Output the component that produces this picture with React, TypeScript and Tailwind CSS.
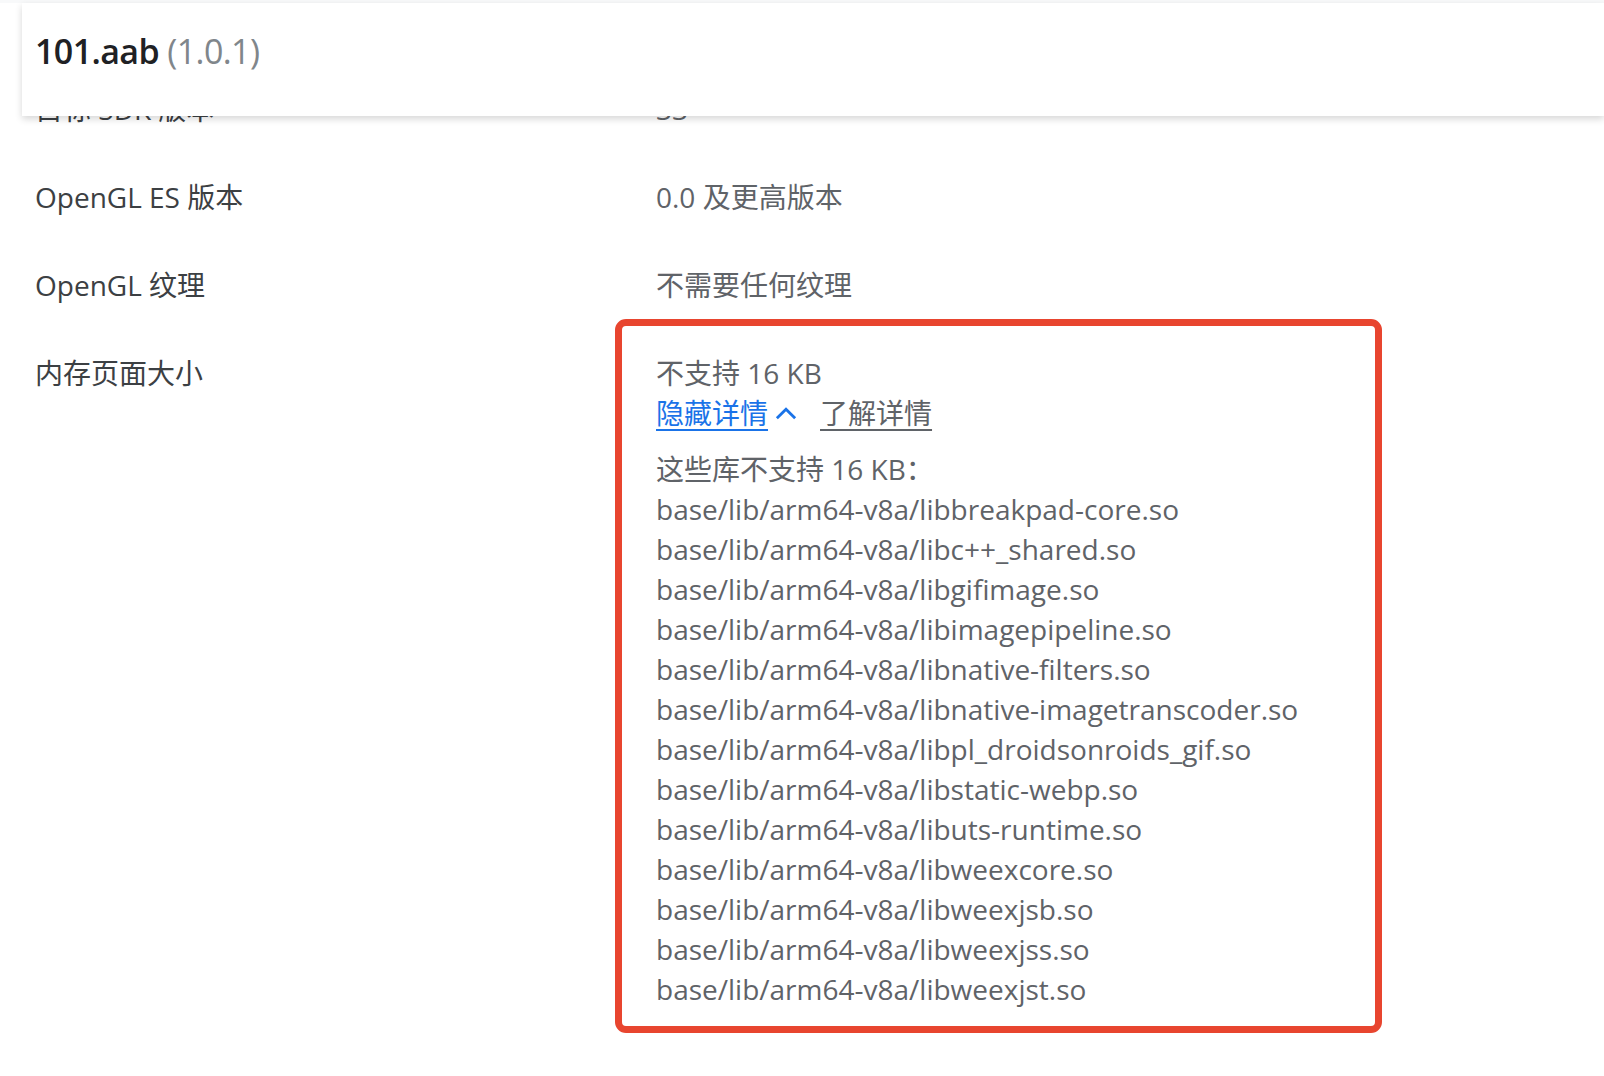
import React from "react";

const FONT = "font-['Open_Sans','Noto_Sans_CJK_SC',sans-serif]";

interface Row {
  label: string;
  value: string;
}

const rows: Row[] = [
  { label: "目标 SDK 版本", value: "33" },
  { label: "OpenGL ES 版本", value: "0.0 及更高版本" },
  { label: "OpenGL 纹理", value: "不需要任何纹理" },
];

const libs = [
  "libbreakpad-core.so",
  "libc++_shared.so",
  "libgifimage.so",
  "libimagepipeline.so",
  "libnative-filters.so",
  "libnative-imagetranscoder.so",
  "libpl_droidsonroids_gif.so",
  "libstatic-webp.so",
  "libuts-runtime.so",
  "libweexcore.so",
  "libweexjsb.so",
  "libweexjss.so",
  "libweexjst.so",
];

const ChevronUp = () => (
  <svg width="26" height="26" viewBox="0 0 24 24" className="ml-[5px]" fill="none">
    <path d="M4.5 16l7.5-7.5 7.5 7.5" stroke="#1a73e8" strokeWidth="2.6" strokeLinecap="square" />
  </svg>
);

const App: React.FC = () => {
  return (
    <div className={`relative h-[1076px] overflow-hidden bg-white ${FONT}`}>
      <div className="h-[3px] bg-[#f8f9fa]" />

      {/* sticky title bar over the scrolled content */}
      <div className="absolute top-[3px] left-[22px] right-0 z-10 h-[113px] bg-white shadow-[0_3px_7px_rgba(0,0,0,0.16)] flex items-center pl-[13px] pb-[17px]">
        <h1 className="text-[34px] tracking-[-0.6px] font-semibold text-[#202124] leading-none">
          101.aab <span className="font-normal text-[#80868b]">(1.0.1)</span>
        </h1>
      </div>

      <div className="pt-[62px] px-[35px] text-[28px] leading-[40px]">
        {rows.map((row, i) => (
          <div key={i} className="grid grid-cols-[621px_1fr] py-[24px]">
            <div className="text-[#3c4043]">{row.label}</div>
            <div className="text-[#5f6368]">{row.value}</div>
          </div>
        ))}

        <div className="grid grid-cols-[621px_1fr] pt-[24px]">
          <div className="text-[#3c4043]">内存页面大小</div>
          <div>
            <div className="-ml-[41px] -mt-[34px] w-[767px] border-[7px] border-[#e8452f] rounded-[11px] pl-[34px] pt-[27px] pb-[17px] text-[#5f6368]">
              <div>不支持 16 KB</div>
              <div className="flex items-center">
                <a className="text-[#1a73e8] underline underline-offset-[5px] decoration-[2px]">隐藏详情</a>
                <ChevronUp />
                <a className="ml-[21px] text-[#5f6368] underline underline-offset-[5px] decoration-[2px]">了解详情</a>
              </div>
              <div className="mt-[16px]">这些库不支持 16 KB：</div>
              {libs.map((lib) => (
                <div key={lib}>base/lib/arm64-v8a/{lib}</div>
              ))}
            </div>
          </div>
        </div>
      </div>
    </div>
  );
};

export default App;
